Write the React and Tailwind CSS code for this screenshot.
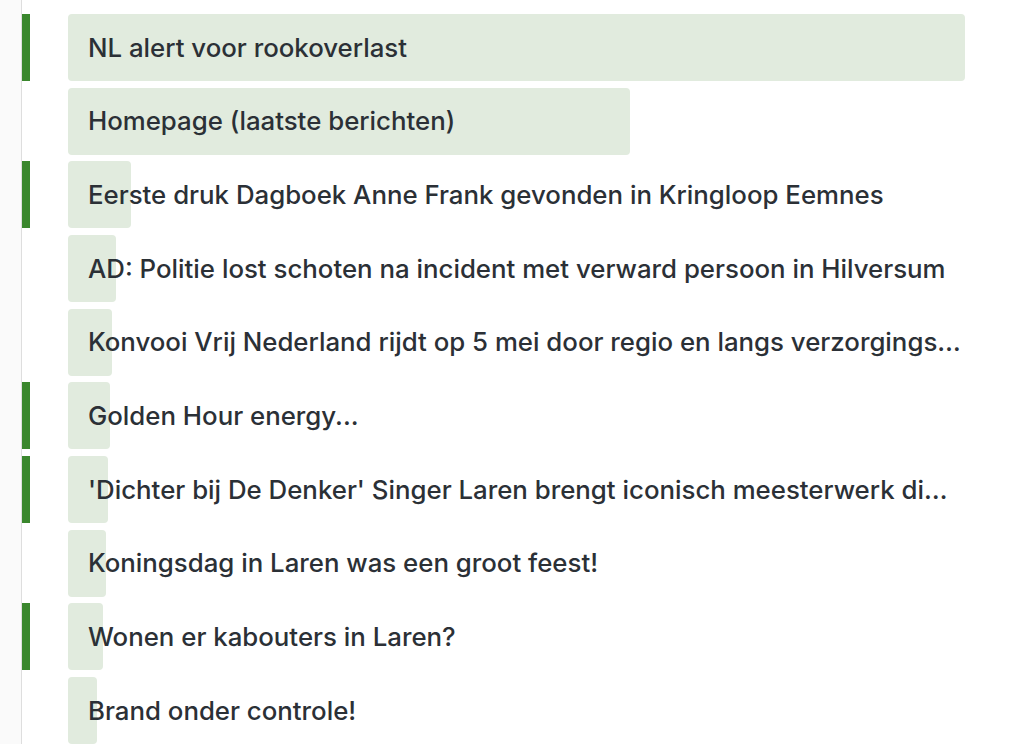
import React from "react";

const rows = [
  { title: "NL alert voor rookoverlast", value: 897, flag: true },
  { title: "Homepage (laatste berichten)", value: 562, flag: false },
  { title: "Eerste druk Dagboek Anne Frank gevonden in Kringloop Eemnes", value: 63, flag: true },
  { title: "AD: Politie lost schoten na incident met verward persoon in Hilversum", value: 48, flag: false },
  { title: "Konvooi Vrij Nederland rijdt op 5 mei door regio en langs verzorgingshuizen in Laren", value: 44, flag: false },
  { title: "Golden Hour energy...", value: 42, flag: true },
  { title: "'Dichter bij De Denker' Singer Laren brengt iconisch meesterwerk dichterbij", value: 40, flag: true },
  { title: "Koningsdag in Laren was een groot feest!", value: 38, flag: false },
  { title: "Wonen er kabouters in Laren?", value: 35, flag: true },
  { title: "Brand onder controle!", value: 29, flag: false },
];

const max = 897;

export default function App() {
  return (
    <div
      className="w-[1024px] h-[744px] flex bg-white overflow-hidden"
      style={{ fontFamily: "Inter, 'Noto Sans', sans-serif" }}
    >
      <div className="w-[22px] shrink-0 bg-[#fafafa] border-r border-[#dedede]" />
      <div className="flex flex-col gap-[6.67px] pt-[14px]">
        {rows.map((r, i) => (
          <div key={i} className="flex h-[67px] shrink-0">
            <div className={`w-[8px] h-full ${r.flag ? "bg-[#3a872d]" : ""}`} />
            <div className="relative ml-[38px] w-[897px] h-full flex items-center">
              <div
                className="absolute left-0 top-0 h-full rounded-[4px] bg-[#e1ebde]"
                style={{ width: `${(r.value / max) * 100}%` }}
              />
              <div className="relative pl-[20px] pr-[3.5px] w-full truncate text-[25.8px] font-medium text-[#2b3036] leading-[1.3]">
                {r.title}
              </div>
            </div>
          </div>
        ))}
      </div>
    </div>
  );
}
